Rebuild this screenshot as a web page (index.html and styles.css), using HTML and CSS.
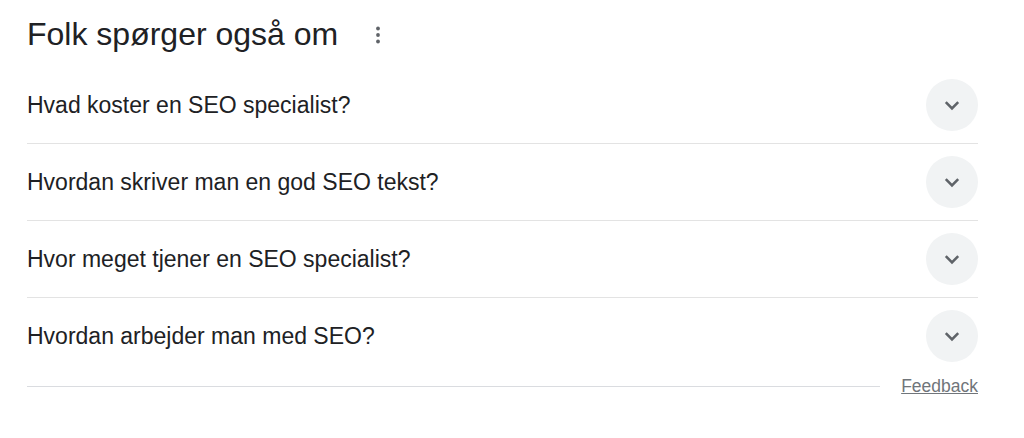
FILE: index.html
```html
<!DOCTYPE html>
<html lang="da">
<head>
<meta charset="utf-8">
<title>Folk spørger også om</title>
<link rel="stylesheet" href="styles.css">
</head>
<body>
<div class="paa">
  <div class="paa-header">
    <h2 class="paa-title">Folk spørger også om</h2>
    <span class="paa-menu" aria-label="Flere valgmuligheder">
      <svg viewBox="0 0 24 24" width="24" height="24"><circle cx="12" cy="5.5" r="1.9"/><circle cx="12" cy="12" r="1.9"/><circle cx="12" cy="18.5" r="1.9"/></svg>
    </span>
  </div>
  <div class="paa-list">
    <div class="paa-row">
      <span class="paa-q">Hvad koster en SEO specialist?</span>
      <span class="paa-btn"><svg viewBox="0 0 24 24" width="24" height="24"><path d="M5.8 9.2L12 15.4l6.2-6.2"/></svg></span>
    </div>
    <div class="paa-row">
      <span class="paa-q">Hvordan skriver man en god SEO tekst?</span>
      <span class="paa-btn"><svg viewBox="0 0 24 24" width="24" height="24"><path d="M5.8 9.2L12 15.4l6.2-6.2"/></svg></span>
    </div>
    <div class="paa-row">
      <span class="paa-q">Hvor meget tjener en SEO specialist?</span>
      <span class="paa-btn"><svg viewBox="0 0 24 24" width="24" height="24"><path d="M5.8 9.2L12 15.4l6.2-6.2"/></svg></span>
    </div>
    <div class="paa-row">
      <span class="paa-q">Hvordan arbejder man med SEO?</span>
      <span class="paa-btn"><svg viewBox="0 0 24 24" width="24" height="24"><path d="M5.8 9.2L12 15.4l6.2-6.2"/></svg></span>
    </div>
  </div>
  <div class="paa-footer">
    <span class="paa-line"></span>
    <a class="paa-feedback" href="#">Feedback</a>
  </div>
</div>
</body>
</html>
```
FILE: styles.css
```css
html, body {
  margin: 0;
  padding: 0;
  background: #ffffff;
}
body {
  font-family: "Liberation Sans", Arial, sans-serif;
  color: #202124;
}
.paa {
  padding: 0 46px 0 27px;
}
.paa-header {
  display: flex;
  align-items: flex-start;
  padding-top: 14px;
  height: 53px;
}
.paa-title {
  margin: 0;
  font-weight: 400;
  font-size: 32px;
  line-height: 40px;
  color: #202124;
}
.paa-menu {
  display: flex;
  margin-left: 28px;
  margin-top: 9px;
}
.paa-menu svg {
  fill: #5f6368;
}
.paa-row {
  display: flex;
  align-items: center;
  justify-content: space-between;
  height: 76px;
  border-bottom: 1px solid #e3e3e3;
}
.paa-row:last-child {
  border-bottom: none;
}
.paa-q {
  font-size: 23px;
  line-height: 30px;
  color: #202124;
}
.paa-btn {
  width: 52px;
  height: 52px;
  border-radius: 50%;
  background: #f1f3f4;
  display: flex;
  align-items: center;
  justify-content: center;
}
.paa-btn svg {
  fill: none;
  stroke: #5f6368;
  stroke-width: 2.6;
}
.paa-footer {
  display: flex;
  align-items: center;
  height: 22px;
  margin-top: 1px;
  gap: 21px;
}
.paa-line {
  flex: 1;
  height: 1px;
  background: #dadce0;
}
.paa-feedback {
  font-size: 17.5px;
  line-height: 22px;
  color: #70757a;
  text-decoration: underline;
}
```
